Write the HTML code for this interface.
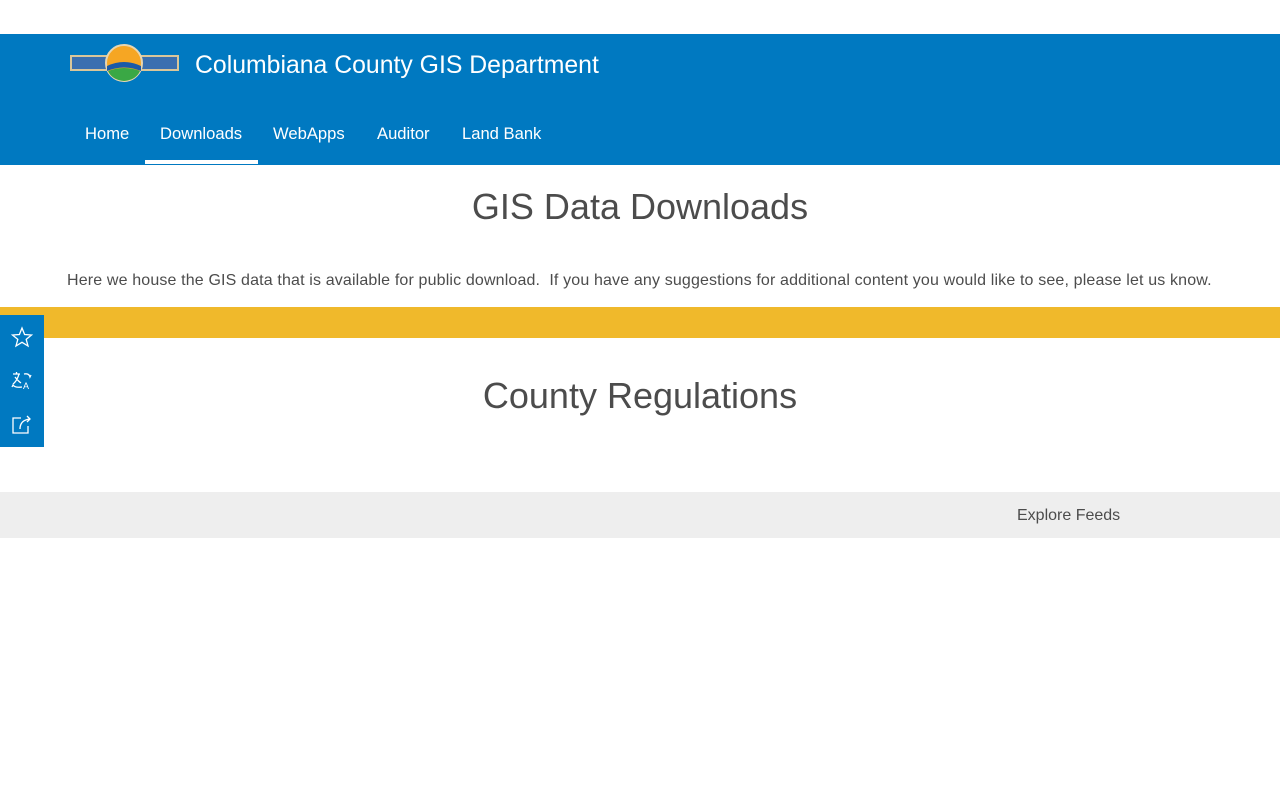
<!DOCTYPE html>
<html><head><meta charset="utf-8"><style>
body{margin:0;width:1280px;height:800px;position:relative;background:#fff;font-family:"Liberation Sans",sans-serif;overflow:hidden}
.hdr{position:absolute;top:34px;left:0;width:1280px;height:131px;background:#0079c1}
.title{position:absolute;left:195px;top:18px;color:#fff;font-size:24.8px;}
.nav{position:absolute;color:#fff;font-size:16.6px}
.ul{position:absolute;left:145px;width:113px;height:4px;background:#fff}
h1{position:absolute;margin:0;width:1280px;text-align:center;font-weight:normal;color:#4c4c4c;font-size:36px}
.p{position:absolute;left:67px;top:272px;font-size:16px;letter-spacing:0.15px;color:#4c4c4c;white-space:nowrap}
.band{position:absolute;top:307px;left:0;width:1280px;height:31px;background:#f0b92b}
.side{position:absolute;left:0;top:315px;width:44px;height:132px;background:#0079c1}
.foot{position:absolute;top:492px;left:0;width:1280px;height:46px;background:#eee}
</style></head><body>
<div class="hdr">
<svg style="position:absolute;left:70px;top:10px" width="109" height="40" viewBox="0 0 109 40">
<rect x="1" y="12" width="107" height="14" fill="#3a6fb0" stroke="#d9c69a" stroke-width="2"/>
<circle cx="54" cy="19" r="18" fill="#f6a623" stroke="#e8d6b0" stroke-width="2"/>
<path d="M37 22 Q54 14 71 22 L71 27 Q54 20 37 27Z" fill="#1a5aa8"/>
<path d="M38 27 Q54 21 70 27 Q66 36 54 37 Q42 36 38 27Z" fill="#3aa845"/>
</svg>
<div class="title">Columbiana County GIS Department</div>
<div class="nav" style="left:85px;top:90px">Home</div>
<div class="nav" style="left:160px;top:90px">Downloads</div>
<div class="nav" style="left:273px;top:90px">WebApps</div>
<div class="nav" style="left:377px;top:90px">Auditor</div>
<div class="nav" style="left:462px;top:90px">Land Bank</div>
<div class="ul" style="top:126px"></div>
</div>
<h1 style="top:186px">GIS Data Downloads</h1>
<div class="p">Here we house the GIS data that is available for public download.&nbsp; If you have any suggestions for additional content you would like to see, please let us know.</div>
<div class="band"></div>
<div class="side">
<svg width="44" height="132" viewBox="0 0 44 132" fill="none" stroke="#fff" stroke-width="1.3">
<path d="M22 13 L24.6 19.5 L31.5 20 L26.2 24.4 L28 31 L22 27.3 L16 31 L17.8 24.4 L12.5 20 L19.4 19.5Z"/>
<path d="M13 59 h7 M16.5 57 v2 M19 59 Q17 66 13 69 M15 62 Q18 66 21 68 M24 59 Q29 58 30 62 l1 -2 M22 72 Q15 73 13 70 l-1 2"/>
<text x="23" y="74" fill="#fff" stroke="none" font-size="9" font-family="Liberation Sans">A</text>
<path d="M21 103 h-8 v15 h15 v-7 M20 114 Q20 105 30 104 M27 101 l3 3 l-3 3"/>
</svg>
</div>
<h1 style="top:375px">County Regulations</h1>
<div class="foot"><div style="position:absolute;left:1017px;top:15px;font-size:16px;color:#4c4c4c">Explore Feeds</div></div>
</body></html>
